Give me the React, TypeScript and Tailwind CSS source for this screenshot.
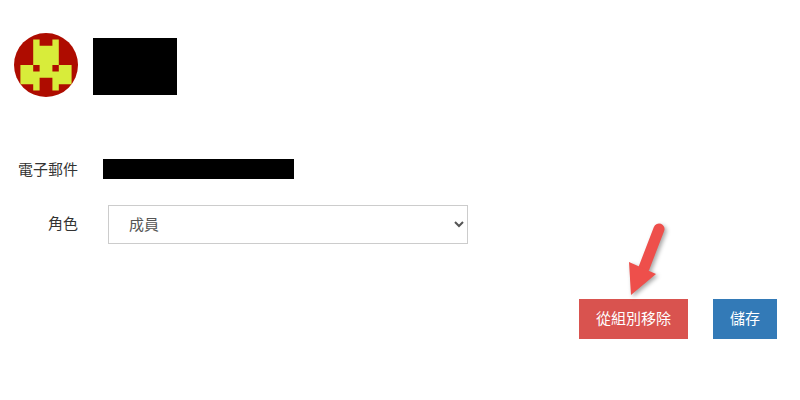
const FONT = "font-['Liberation_Sans','Noto_Sans_CJK_TC',sans-serif]";

function Avatar() {
  return (
    <svg viewBox="0 0 10 10" className="w-16 h-16 rounded-full bg-[#ae0c00] shrink-0">
      <path
        fillRule="evenodd"
        fill="#d8ec3a"
        d="M3 1h1v1h2V1h1v4h2v3H7v1H6V7H4v2H3V8H1V5h2zM3 5v1h1V5zM6 5v1h1V5z"
      />
    </svg>
  );
}

function Arrow() {
  return (
    <svg
      className="absolute left-[620px] top-[215px] w-[60px] h-[90px] drop-shadow-[2px_2px_2px_rgba(0,0,0,0.35)]"
      viewBox="0 0 60 90"
    >
      <g transform="translate(-620 -215)">
        <path d="M659 229 L644 268" stroke="#ee4f4b" strokeWidth="11" strokeLinecap="round" fill="none" />
        <path d="M629 262 L656 274 L631 295 Z" fill="#ee4f4b" />
      </g>
    </svg>
  );
}

export default function App() {
  return (
    <div className={`${FONT} relative w-[800px] h-[400px] bg-white text-[15px] text-[#333] overflow-hidden`}>
      <div className="flex items-start gap-[15px] pl-[14px] pt-[33px]">
        <Avatar />
        <div className="w-[84px] h-[57px] mt-[5px] bg-black" />
      </div>

      <div className="flex items-center mt-[62px] h-5 pl-[18px]">
        <span className="w-[85px] mt-[2px]">電子郵件</span>
        <div className="w-[191px] h-5 bg-black" />
      </div>

      <div className="flex items-center mt-[26px] pl-[18px]">
        <span className="w-[90px] pl-[30px]">角色</span>
        <select className="w-[360px] h-[39px] pl-4 pr-1 border border-[#ccc] bg-white text-[#555] outline-none">
          <option>成員</option>
          <option>管理員</option>
        </select>
      </div>

      <div className="flex justify-end gap-[25px] mt-[55px] pr-[23px]">
        <button className="w-[109px] h-10 bg-[#d9534f] text-white">從組別移除</button>
        <button className="w-16 h-10 bg-[#337ab7] text-white">儲存</button>
      </div>

      <Arrow />
    </div>
  );
}
